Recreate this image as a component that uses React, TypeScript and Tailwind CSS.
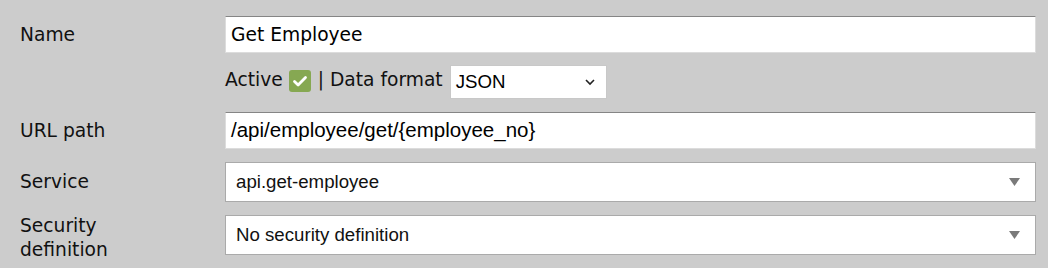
import { useState } from "react";

const dv = "font-['DejaVu_Sans',sans-serif]";
const lib = "font-['Liberation_Sans',Arial,sans-serif]";

function Label({ children }: { children: React.ReactNode }) {
  return <div className={`${dv} text-[18.67px] leading-[24px] text-[#111]`}>{children}</div>;
}

function TextBox({ value, font }: { value: string; font: string }) {
  return (
    <div
      className={`h-[37px] flex items-center bg-white border border-[#dcdcdc] border-t-[#858585] pl-[5px] text-black ${font}`}
    >
      {value}
    </div>
  );
}

function Combo({ value }: { value: string }) {
  return (
    <div className="h-[40px] flex items-center justify-between bg-white border border-[#aaaaaa] pl-[10px] pr-[15px]">
      <span className={`${lib} text-[18.67px] text-[#111]`}>{value}</span>
      <svg width="11" height="8" viewBox="0 0 11 8">
        <path d="M0 0h11L5.5 8z" fill="#7a7a7a" />
      </svg>
    </div>
  );
}

export default function App() {
  const [active, setActive] = useState(true);

  return (
    <div className="w-[1048px] h-[268px] bg-[#cccccc] pt-[16px] pl-[20px] pr-[12px]">
      <div className="grid grid-cols-[205px_1fr] items-center">
        <Label>Name</Label>
        <TextBox value="Get Employee" font={`${dv} text-[18.67px]`} />

        <div />
        <div className={`${dv} text-[18.67px] leading-[22px] text-[#111] flex items-start mt-[12px] h-[34px]`}>
          <span className="mt-[4px]">Active</span>
          <button
            type="button"
            onClick={() => setActive(!active)}
            className="ml-[6px] mt-[5px] w-[22px] h-[22px] rounded-[3px] bg-[#86a852] flex items-center justify-center"
          >
            {active && (
              <svg width="18" height="18" viewBox="0 0 18 18">
                <path d="M3.5 9.5l3.6 3.6L14.5 5.5" stroke="#fff" strokeWidth="2.8" fill="none" strokeLinecap="round" strokeLinejoin="round" />
              </svg>
            )}
          </button>
          <span className="ml-[7px] mt-[4px]">| Data format</span>
          <div className="ml-[7px] w-[157px] h-[34px] bg-white border border-[#c8c8c8] flex items-center justify-between pl-[5px] pr-[10px]">
            <span className={`${lib} text-[18.67px] text-black`}>JSON</span>
            <svg width="12" height="8" viewBox="0 0 12 8">
              <path d="M2 2l4 4 4-4" stroke="#222" strokeWidth="1.6" fill="none" />
            </svg>
          </div>
        </div>

        <div className="mt-[13px]">
          <Label>URL path</Label>
        </div>
        <div className="mt-[13px]">
          <TextBox value="/api/employee/get/{employee_no}" font={`${lib} text-[20.5px]`} />
        </div>

        <div className="mt-[13px]">
          <Label>Service</Label>
        </div>
        <div className="mt-[13px]">
          <Combo value="api.get-employee" />
        </div>

        <div className="mt-[9px] translate-y-[3px]">
          <Label>
            Security
            <br />
            definition
          </Label>
        </div>
        <div className="mt-[9px]">
          <Combo value="No security definition" />
        </div>
      </div>
    </div>
  );
}
